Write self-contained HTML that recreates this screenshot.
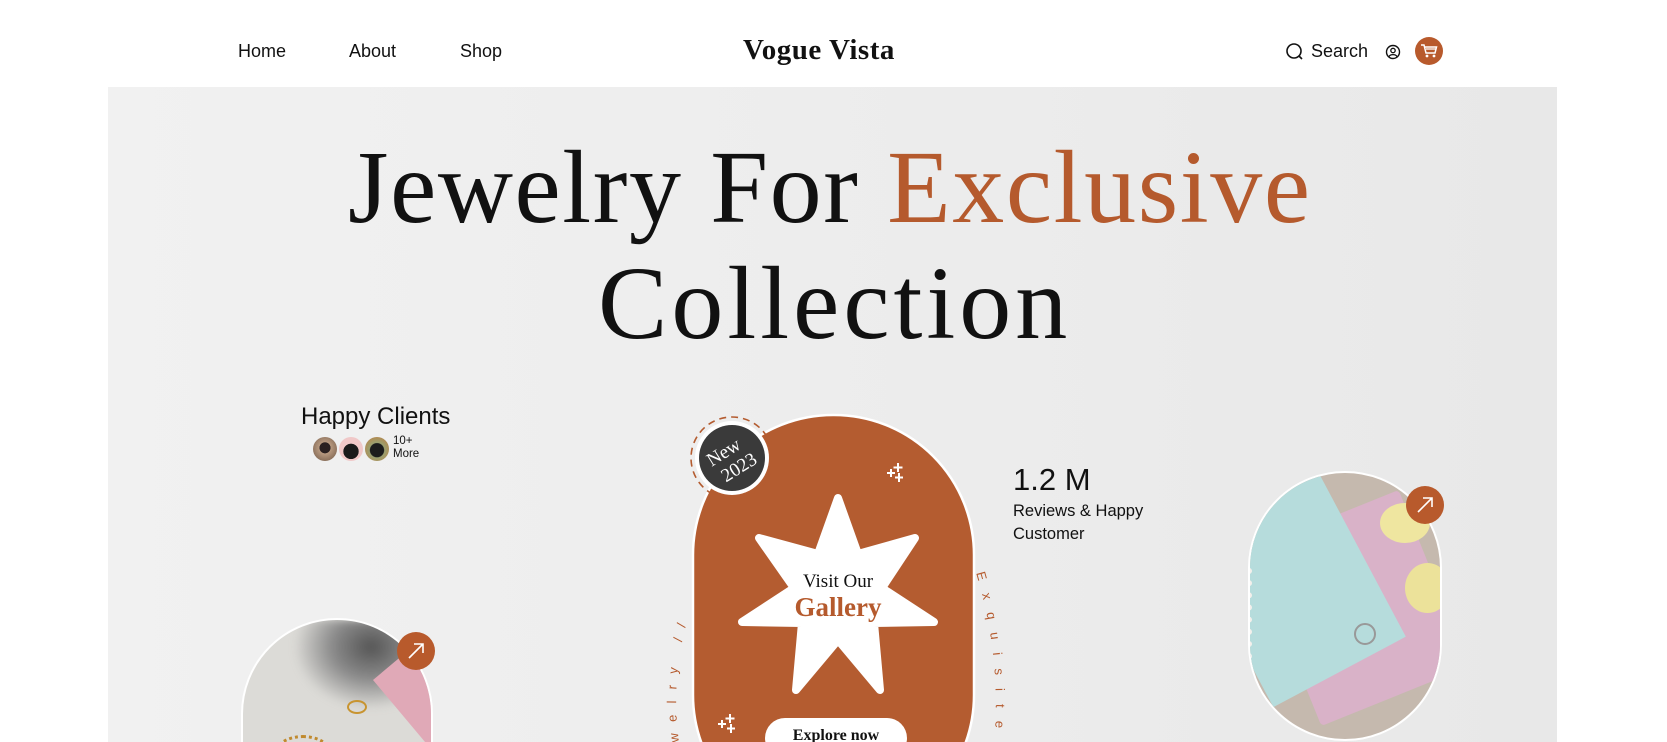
<!DOCTYPE html>
<html><head><meta charset="utf-8"><style>
*{margin:0;padding:0;box-sizing:border-box}
html,body{width:1667px;height:742px;overflow:hidden}
body{background:#fff;font-family:"Liberation Sans",sans-serif;position:relative;color:#111}
.a{position:absolute}
.nav{font-size:18px;top:41px}
.panel{left:108px;top:87px;width:1449px;height:655px;background:linear-gradient(90deg,#f1f1f1,#ececec 60%,#e8e8e8);overflow:hidden}
.h{font-family:"Liberation Serif",serif;font-size:104px;white-space:nowrap}
</style></head><body>
<div class="a nav" style="left:238px">Home</div>
<div class="a nav" style="left:349px">About</div>
<div class="a nav" style="left:460px">Shop</div>
<div class="a" style="left:743px;top:34px;font-family:'Liberation Serif',serif;font-weight:bold;font-size:29px;letter-spacing:0.5px">Vogue Vista</div>
<svg class="a" style="left:1285px;top:42px" width="20" height="20" viewBox="0 0 20 20"><circle cx="9" cy="9" r="7" fill="none" stroke="#111" stroke-width="1.6"/><path d="M14 14l3 3" stroke="#111" stroke-width="1.6"/></svg>
<div class="a" style="left:1311px;top:41px;font-size:18px">Search</div>
<svg class="a" style="left:1385px;top:44px" width="16" height="16" viewBox="0 0 16 16"><circle cx="8" cy="8" r="6.5" fill="none" stroke="#111" stroke-width="1.4"/><circle cx="8" cy="6.5" r="2.2" fill="none" stroke="#111" stroke-width="1.3"/><path d="M4 12.5c1.5-2.5 6.5-2.5 8 0" fill="none" stroke="#111" stroke-width="1.3"/></svg>
<div class="a" style="left:1415px;top:37px;width:28px;height:28px;border-radius:50%;background:#b85a2c"></div>
<svg class="a" style="left:1419px;top:42px" width="20" height="18" viewBox="0 0 20 18"><path d="M2 3h3l2 8h9l1.5-6H6" fill="none" stroke="#fff" stroke-width="1.5"/><path d="M7 7h10" stroke="#fff" stroke-width="1.3"/><circle cx="8" cy="14" r="1.4" fill="#fff"/><circle cx="15" cy="14" r="1.4" fill="#fff"/></svg>

<div class="a panel">
 <div class="a h" style="left:240px;top:41px;letter-spacing:1.6px">Jewelry For <span style="color:#b55a2d">Exclusive</span></div>
 <div class="a h" style="left:490px;top:157px;letter-spacing:4px">Collection</div>
 <div class="a" style="left:193px;top:316px;font-size:24px">Happy Clients</div>
 <div class="a" style="left:205px;top:350px;width:24px;height:24px;border-radius:50%;background:radial-gradient(circle at 50% 45%,#2a2020 30%,#b89a80 32%,#6d5442)"></div>
 <div class="a" style="left:231px;top:350px;width:24px;height:24px;border-radius:50%;background:radial-gradient(circle at 50% 60%,#1a1a1a 40%,#f0c8c8 42%)"></div>
 <div class="a" style="left:257px;top:350px;width:24px;height:24px;border-radius:50%;background:radial-gradient(circle at 50% 55%,#1c1c1c 38%,#9aa070 42%,#c47a3a)"></div>
 <div class="a" style="left:285px;top:348px;font-size:11.5px;line-height:13px">10+<br>More</div>

 <div class="a" style="left:133px;top:531px;width:192px;height:200px;border-radius:96px 96px 0 0;border:2px solid #fff;overflow:hidden;background:#dcdbd7">
  <div class="a" style="left:50px;top:0;width:130px;height:90px;background:radial-gradient(ellipse at 60% 30%,#555 0%,#8a8a8a 35%,transparent 70%);filter:blur(4px)"></div>
  <div class="a" style="width:200px;height:200px;background:#e0a9b7;transform:rotate(-40deg);transform-origin:0 0;left:130px;top:60px"></div>
  <div class="a" style="left:104px;top:80px;width:20px;height:14px;border:2px solid #c89430;border-radius:50%"></div>
  <div class="a" style="left:30px;top:115px;width:60px;height:40px;border:3px dotted #c08a2e;border-radius:50%"></div>
 </div>
 <div class="a" style="left:289px;top:545px;width:38px;height:38px;border-radius:50%;background:#b85a2c"></div>
 <svg class="a" style="left:297px;top:553px" width="22" height="22" viewBox="0 0 22 22"><path d="M4 18L18 4M9 4h9v9" fill="none" stroke="#fff" stroke-width="1.6"/></svg>

 <svg class="a" style="left:480px;top:300px" width="480" height="355" viewBox="480 300 480 355">
  <defs><path id="cl" d="M578 690 A300 300 0 0 1 596 488"/><path id="cr" d="M868 486 A450 450 0 0 1 882 690"/></defs>
  <rect x="585" y="328" width="281" height="420" rx="140" fill="#b45c30" stroke="#fff" stroke-width="2.5"/>
  <circle cx="624" cy="371" r="41" fill="none" stroke="#b45c30" stroke-width="1.6" stroke-dasharray="7 5"/>
  <circle cx="624" cy="371" r="37" fill="#fff"/>
  <circle cx="624" cy="371" r="33" fill="#3a3a3a"/>
  <text transform="translate(624 373) rotate(-32)" text-anchor="middle" fill="#fff" font-family="Liberation Serif,serif" font-size="19"><tspan x="-3" y="-5">New</tspan><tspan x="2" y="16">2023</tspan></text>
  <polygon points="730,411 750,467 807,451 774,501 826,535 766,536 772,603 730,553 688,603 694,536 634,535 686,501 651,451 710,467" fill="#fff" stroke="#fff" stroke-width="8" stroke-linejoin="round"/>
  <text x="730" y="500" text-anchor="middle" font-family="Liberation Serif,serif" font-size="19" fill="#111">Visit Our</text>
  <text x="730" y="529" text-anchor="middle" font-family="Liberation Serif,serif" font-size="27" font-weight="bold" fill="#b55a2d">Gallery</text>
  <g stroke="#fff" stroke-width="2"><path d="M790 376v9M785.5 380.5h9M783 382v8M779 386h8M791 386v9M787 390.5h8"/><path d="M622 627v9M617.5 631.5h9M614 633v8M610 637h8M623 637v9M619 641.5h8"/></g>
  <rect x="657" y="631" width="142" height="40" rx="20" fill="#fff"/>
  <text x="728" y="653" text-anchor="middle" font-family="Liberation Serif,serif" font-size="16" font-weight="bold" fill="#111">Explore now</text>
  <text font-size="13" fill="#b55a2d" letter-spacing="11"><textPath href="#cl">Jewelry //</textPath></text>
  <text font-size="13" fill="#b55a2d" letter-spacing="13"><textPath href="#cr">Exquisite</textPath></text>
 </svg>

 <div class="a" style="left:905px;top:375px;font-size:31px">1.2 M</div>
 <div class="a" style="left:905px;top:413px;font-size:16.5px;line-height:23px">Reviews &amp; Happy<br>Customer</div>

 <div class="a" style="left:1140px;top:384px;width:194px;height:270px;border-radius:97px;border:2px solid #fff;overflow:hidden;background:#c5b9ae">
  <div class="a" style="width:160px;height:190px;background:#d9b2c8;transform:rotate(-22deg);left:30px;top:40px;border-radius:4px"></div>
  <div class="a" style="width:150px;height:190px;background:#b6dcdc;transform:rotate(-28deg);left:-30px;top:20px"></div>
  <div class="a" style="left:130px;top:30px;width:50px;height:40px;border-radius:50%;background:#efe6a0"></div>
  <div class="a" style="left:155px;top:90px;width:45px;height:50px;border-radius:50%;background:#ece29a"></div>
  <div class="a" style="left:104px;top:150px;width:22px;height:22px;border:2px solid #999;border-radius:50%"></div>
  <div class="a" style="left:-4px;top:95px;width:30px;height:140px;border-left:6px dotted #f4f0ec"></div>
 </div>
 <div class="a" style="left:1298px;top:399px;width:38px;height:38px;border-radius:50%;background:#b85a2c"></div>
 <svg class="a" style="left:1306px;top:407px" width="22" height="22" viewBox="0 0 22 22"><path d="M4 18L18 4M9 4h9v9" fill="none" stroke="#fff" stroke-width="1.6"/></svg>
</div>
</body></html>
